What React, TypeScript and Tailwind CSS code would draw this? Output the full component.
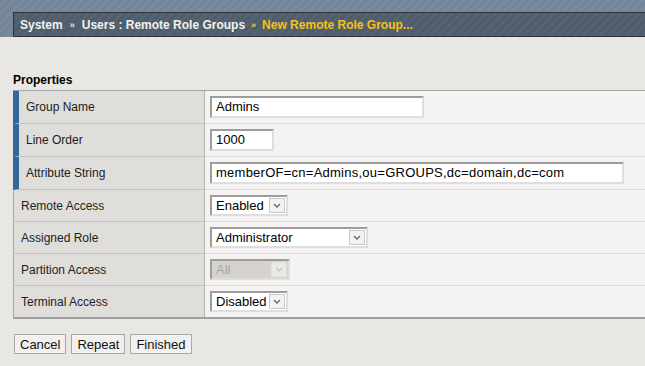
import React from 'react';

type Row = {
  label: string;
  required?: boolean;
  tall?: boolean;
  field: React.ReactNode;
};

function TextBox({ value, width, wide }: { value: string; width: string; wide?: boolean }) {
  return (
    <div
      className={`${width} h-[22px] bg-white border-2 border-t-[#9d9d9d] border-l-[#9d9d9d] border-r-[#dedede] border-b-[#dedede] flex items-center pl-[4px] text-[13px] text-black ${
        wide ? 'tracking-[0.25px]' : ''
      }`}
    >
      {value}
    </div>
  );
}

function Chevron({ muted }: { muted?: boolean }) {
  return (
    <svg width="8" height="5" viewBox="0 0 8 5">
      <path d="M1 1 L4 4 L7 1" fill="none" stroke={muted ? '#c4c4c4' : '#6b6b6b'} strokeWidth="1.4" />
    </svg>
  );
}

function DropDown({ value, width, disabled }: { value: string; width: string; disabled?: boolean }) {
  return (
    <div
      className={`${width} h-[21px] border-2 border-t-[#9d9d9d] border-l-[#9d9d9d] border-r-[#dedede] border-b-[#dedede] flex items-stretch ${
        disabled ? 'bg-[#d6d3ce] text-[#a4a4a4]' : 'bg-white text-black'
      }`}
    >
      <div className="flex-1 flex items-center pl-[4px] text-[13px] leading-none">{value}</div>
      <div
        className={`w-[16px] my-[1px] mr-[1px] border flex items-center justify-center ${
          disabled ? 'border-[#e2e0dc] bg-[#ebe9e6]' : 'border-[#c9c9c9] bg-[#f3f3f3]'
        }`}
      >
        <Chevron muted={disabled} />
      </div>
    </div>
  );
}

const rows: Row[] = [
  { label: 'Group Name', required: true, tall: true, field: <TextBox value="Admins" width="w-[214px]" /> },
  { label: 'Line Order', required: true, tall: true, field: <TextBox value="1000" width="w-[64px]" /> },
  {
    label: 'Attribute String',
    required: true,
    tall: true,
    field: <TextBox value="memberOF=cn=Admins,ou=GROUPS,dc=domain,dc=com" width="w-[414px]" wide />,
  },
  { label: 'Remote Access', field: <DropDown value="Enabled" width="w-[78px]" /> },
  { label: 'Assigned Role', field: <DropDown value="Administrator" width="w-[158px]" /> },
  { label: 'Partition Access', field: <DropDown value="All" width="w-[80px]" disabled /> },
  { label: 'Terminal Access', field: <DropDown value="Disabled" width="w-[78px]" /> },
];

export default function App() {
  return (
    <div className="min-h-[366px] bg-[#e9e7e3] font-['Liberation_Sans',Arial,sans-serif] text-[12px] text-[#1d1d1d]">
      {/* Breadcrumb header */}
      <div className="h-[37px] pt-[12px] pl-[13px] bg-[repeating-linear-gradient(135deg,#74859a_0px,#74859a_3px,#7a8a9d_3px,#7a8a9d_6px)]">
        <div className="h-[25px] border-y border-l border-[#2f3336] bg-[repeating-linear-gradient(135deg,#4f5c69_0px,#4f5c69_3px,#55626f_3px,#55626f_6px)] flex items-center pl-[6px] font-bold text-[12px]">
          <span className="text-[#f2f2f2]">System</span>
          <span className="text-[#e6e6e6] text-[9px] mx-[7px] mt-[2px]">»</span>
          <span className="text-[#f2f2f2]">Users : Remote Role Groups</span>
          <span className="text-[#e9c65a] text-[9px] ml-[6px] mr-[6px] mt-[2px]">»</span>
          <span className="text-[#f5c21b]">New Remote Role Group...</span>
        </div>
      </div>

      {/* Properties */}
      <div className="pl-[13px] pt-[36px] font-bold text-[12px] leading-[14px] text-black">Properties</div>

      <div className="ml-[13px] mt-[3px] border-t border-t-[#a5a5a5] border-b-2 border-b-[#a0a0a0]">
        {rows.map((row, i) => {
          const last = i === rows.length - 1;
          return (
            <div key={row.label} className={`flex ${row.tall ? 'h-[33px]' : last ? 'h-[31px]' : 'h-[32px]'}`}>
              <div
                className={`w-[192px] flex items-center pl-[7px] bg-[#dfdedb] border-r border-r-[#b3b3b3] ${
                  row.required ? 'border-l-[6px] border-l-[#33679a]' : 'border-l border-l-[#a5a5a5]'
                } ${last ? '' : 'border-b border-b-[#c2c2c2]'}`}
              >
                {row.label}
              </div>
              <div
                className={`flex-1 flex items-center pl-[5px] bg-[#f4f3f1] ${last ? '' : 'border-b border-b-[#dddcda]'}`}
              >
                {row.field}
              </div>
            </div>
          );
        })}
      </div>

      {/* Buttons */}
      <div className="flex gap-[5px] ml-[14px] mt-[15px]">
        {['Cancel', 'Repeat', 'Finished'].map((b) => (
          <button
            key={b}
            className="h-[20px] px-[5px] border border-[#a8a8a8] bg-[#f1f0ee] text-[13px] text-[#111] leading-none"
          >
            {b}
          </button>
        ))}
      </div>
    </div>
  );
}
